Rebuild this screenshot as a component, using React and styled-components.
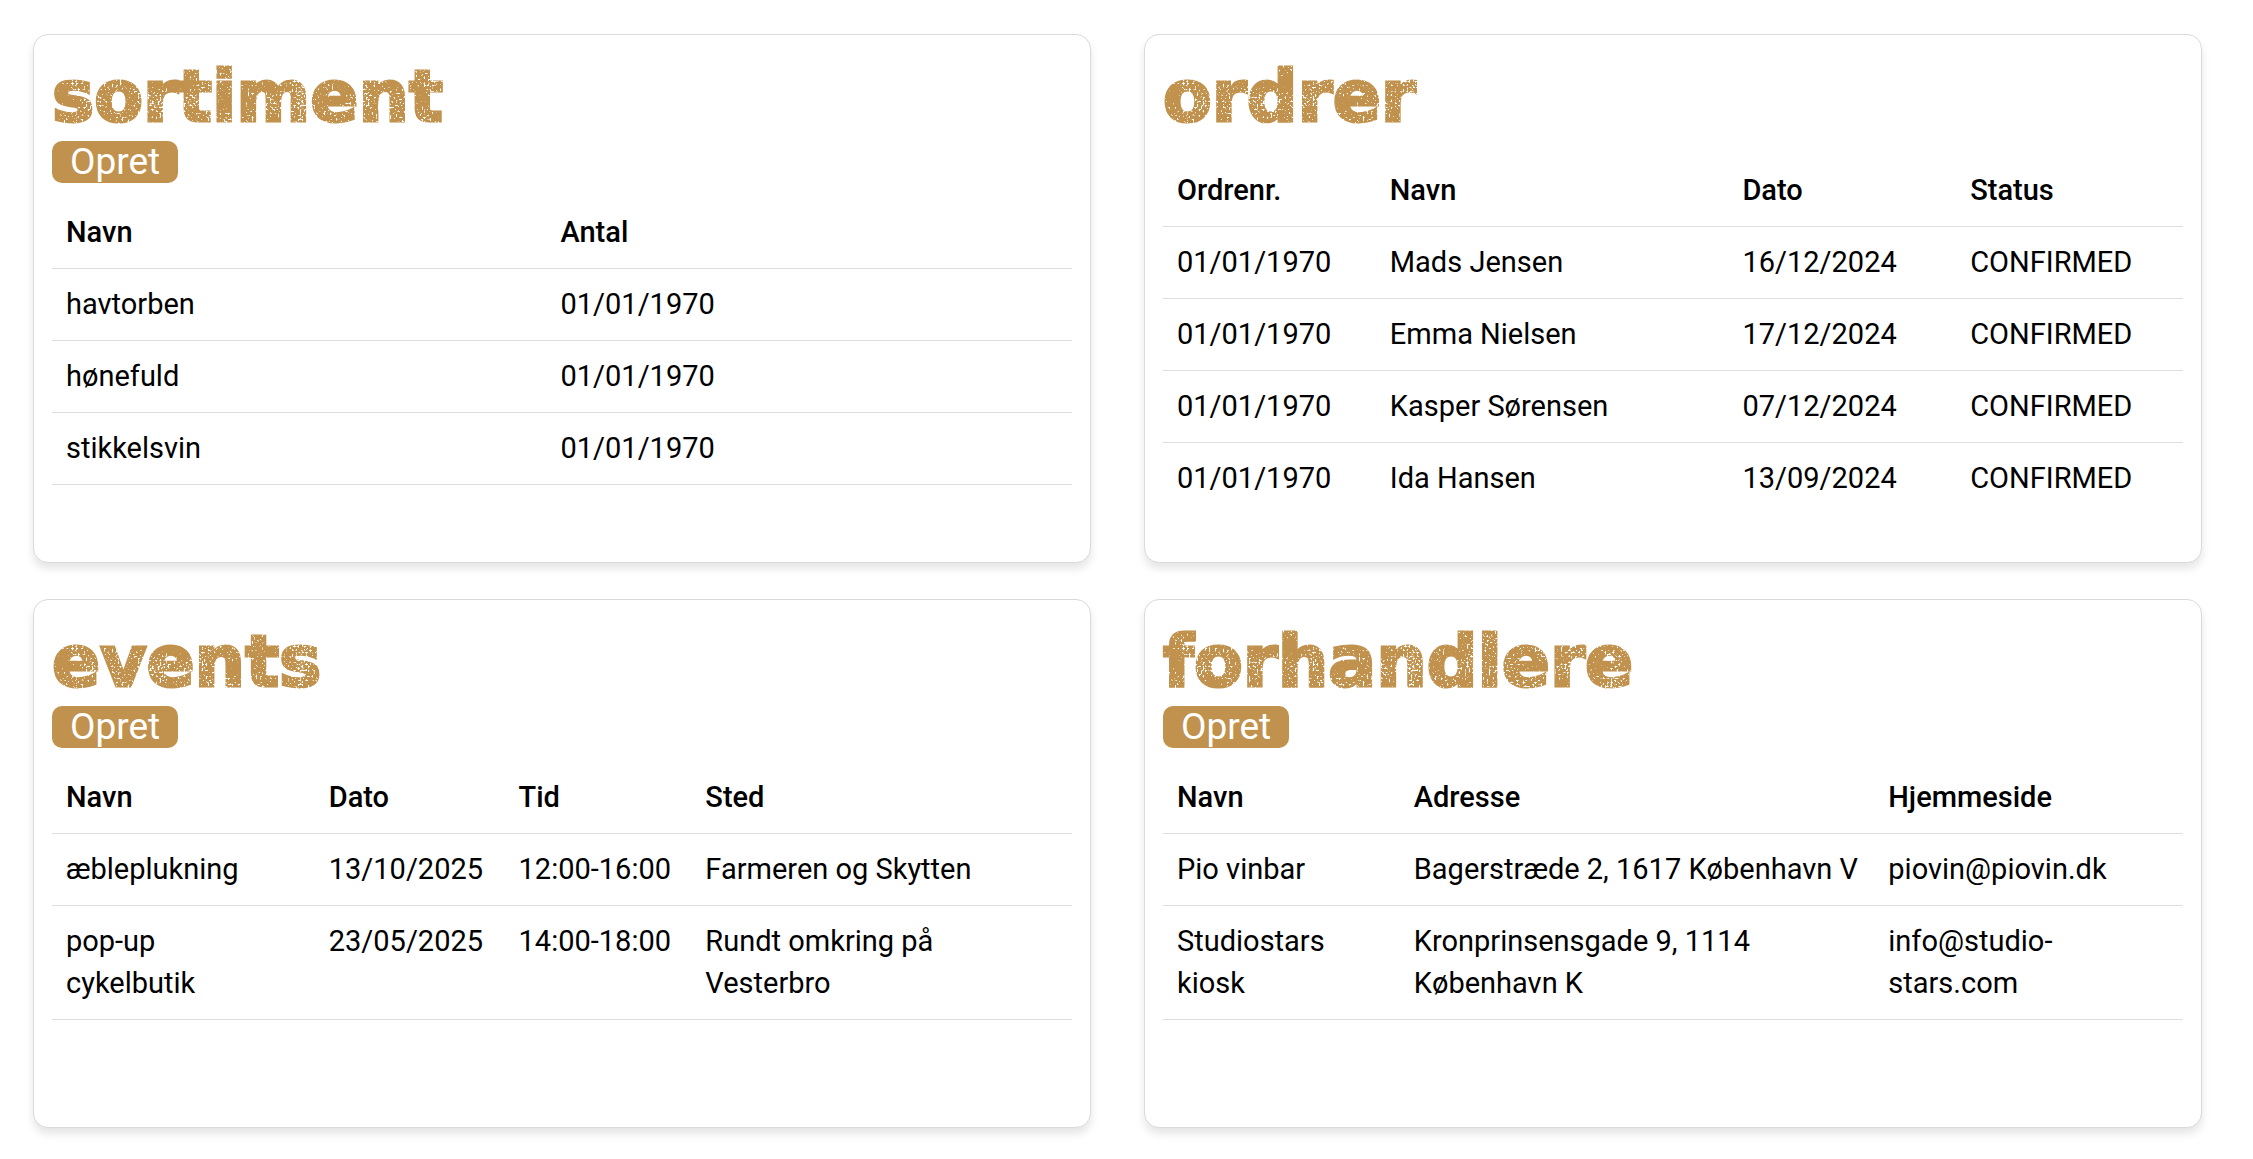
import styled, { createGlobalStyle } from "styled-components";

const cards = [
  {
    title: "sortiment",
    create: true,
    widths: [495, 526],
    head: ["Navn", "Antal"],
    rows: [
      ["havtorben", "01/01/1970"],
      ["hønefuld", "01/01/1970"],
      ["stikkelsvin", "01/01/1970"],
    ],
  },
  {
    title: "ordrer",
    openEnd: true,
    widths: [213, 353, 228, 227],
    head: ["Ordrenr.", "Navn", "Dato", "Status"],
    rows: [
      ["01/01/1970", "Mads Jensen", "16/12/2024", "CONFIRMED"],
      ["01/01/1970", "Emma Nielsen", "17/12/2024", "CONFIRMED"],
      ["01/01/1970", "Kasper Sørensen", "07/12/2024", "CONFIRMED"],
      ["01/01/1970", "Ida Hansen", "13/09/2024", "CONFIRMED"],
    ],
  },
  {
    title: "events",
    create: true,
    widths: [263, 190, 187, 381],
    head: ["Navn", "Dato", "Tid", "Sted"],
    rows: [
      ["æbleplukning", "13/10/2025", "12:00-16:00", "Farmeren og Skytten"],
      [
        "pop-up\ncykelbutik",
        "23/05/2025",
        "14:00-18:00",
        "Rundt omkring på\nVesterbro",
      ],
    ],
  },
  {
    title: "forhandlere",
    create: true,
    widths: [237, 475, 309],
    head: ["Navn", "Adresse", "Hjemmeside"],
    rows: [
      ["Pio vinbar", "Bagerstræde 2, 1617 København V", "piovin@piovin.dk"],
      [
        "Studiostars\nkiosk",
        "Kronprinsensgade 9, 1114\nKøbenhavn K",
        "info@studio-\nstars.com",
      ],
    ],
  },
];

const DataTable = ({ widths, head, rows, openEnd }) => {
  const total = widths.reduce((sum, w) => sum + w, 0);

  return (
    <Table $openEnd={openEnd}>
      <colgroup>
        {widths.map((w, i) => (
          <col key={i} style={{ width: `${(w / total) * 100}%` }} />
        ))}
      </colgroup>
      <thead>
        <tr>
          {head.map((label) => (
            <HeadCell key={label} scope="col">
              {label}
            </HeadCell>
          ))}
        </tr>
      </thead>
      <tbody>
        {rows.map((row, i) => (
          <tr key={i}>
            {row.map((value, j) => (
              <Cell key={j}>{value}</Cell>
            ))}
          </tr>
        ))}
      </tbody>
    </Table>
  );
};

// worn print look for the headings
const DirtFilter = () => (
  <Defs aria-hidden="true">
    <filter id="dirt" x="-2%" y="0" width="104%" height="100%">
      <feTurbulence
        type="fractalNoise"
        baseFrequency="0.5"
        numOctaves="2"
        seed="4"
        result="fine"
      />
      <feTurbulence
        type="fractalNoise"
        baseFrequency="0.05"
        numOctaves="1"
        seed="9"
        result="patches"
      />
      <feComposite
        in="fine"
        in2="patches"
        operator="arithmetic"
        k1="0"
        k2="1"
        k3="0.5"
        k4="-0.25"
        result="mixed"
      />
      <feColorMatrix
        in="mixed"
        type="matrix"
        values="0 0 0 0 0  0 0 0 0 0  0 0 0 0 0  0 0 0 9 -5.5"
        result="specks"
      />
      <feComposite in="SourceGraphic" in2="specks" operator="out" />
    </filter>
  </Defs>
);

const App = () => {
  return (
    <>
      <GlobalStyle />
      <DirtFilter />
      <Dashboard>
        {cards.map((card) => (
          <Card key={card.title}>
            <Title>{card.title}</Title>
            {card.create && <CreateButton type="button">Opret</CreateButton>}
            <DataTable {...card} />
          </Card>
        ))}
      </Dashboard>
    </>
  );
};

const GlobalStyle = createGlobalStyle`
  * {
    box-sizing: border-box;
  }

  body {
    margin: 0;
    background: #fff;
    color: #000;
    font-family: Roboto, "Liberation Sans", sans-serif;
  }
`;

const Defs = styled.svg`
  position: absolute;
  width: 0;
  height: 0;
`;

const Dashboard = styled.main`
  display: grid;
  grid-template-columns: repeat(2, minmax(0, 1fr));
  grid-auto-rows: 1fr;
  gap: 36px 53px;
  min-height: 100vh;
  padding: 34px 51px 31px 33px;
`;

const Card = styled.section`
  display: flex;
  flex-direction: column;
  align-items: flex-start;
  padding: 18px;
  border: 1px solid #dadada;
  border-radius: 15px;
  background: #fff;
  box-shadow: 0 6px 9px rgba(0, 0, 0, 0.1);
`;

const Title = styled.h2`
  margin: 0;
  color: #c1924d;
  font-family: "DejaVu Sans", sans-serif;
  font-size: 71px;
  font-weight: 700;
  line-height: 88px;
  -webkit-text-stroke: 3px #c1924d;
  filter: url(#dirt);
`;

const CreateButton = styled.button`
  padding: 0 18px;
  border: none;
  border-radius: 10px;
  background: #c1924d;
  color: #fff;
  font-family: inherit;
  font-size: 37px;
  line-height: 42px;
  cursor: pointer;
`;

const Table = styled.table`
  width: 100%;
  margin-top: 14px;
  border-spacing: 0;
  table-layout: fixed;

  tbody tr:last-child td {
    border-bottom-color: ${(props) =>
      props.$openEnd ? "transparent" : "#dcdee2"};
  }
`;

const Cell = styled.td`
  padding: 14px 14px 15px;
  border-bottom: 1px solid #dcdee2;
  font-size: 29px;
  line-height: 42px;
  text-align: left;
  vertical-align: top;
  white-space: pre-line;
`;

const HeadCell = styled(Cell).attrs({ as: "th" })`
  font-weight: 500;
`;

export default App;
